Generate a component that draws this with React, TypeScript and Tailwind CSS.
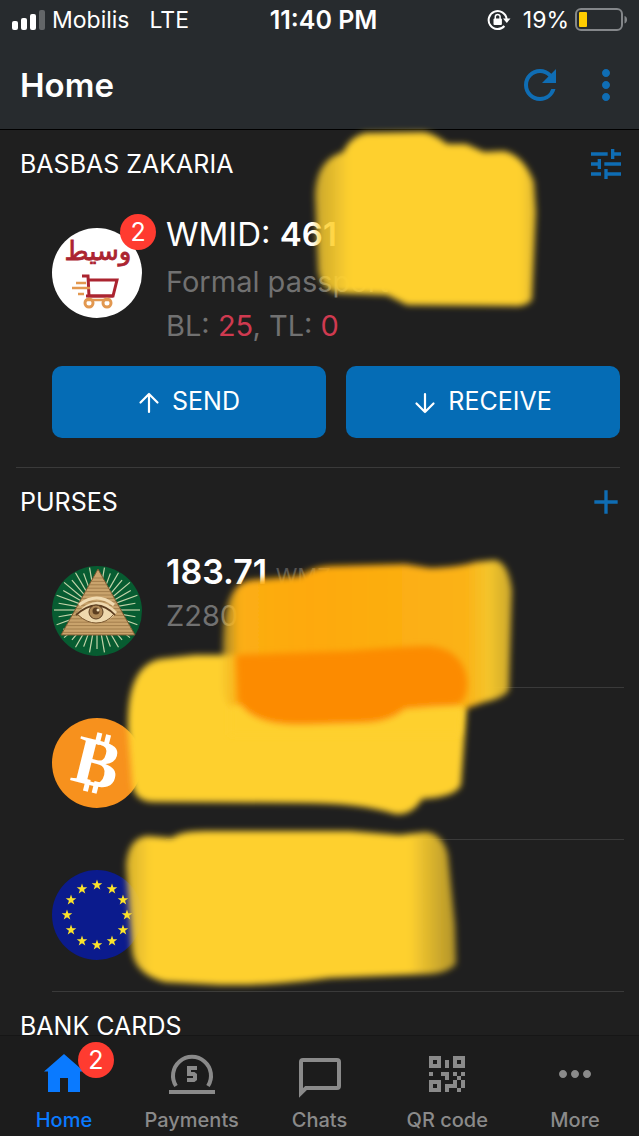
import * as React from 'react';
import { MdAdd, MdMoreHoriz, MdMoreVert, MdRefresh, MdTune } from 'react-icons/md';

function SignalIcon() {
  return (
    <svg width="34" height="20" viewBox="0 0 34 20" fill="#fff">
      <rect x="0" y="11" width="6" height="9" rx="2" />
      <rect x="9" y="8" width="6" height="12" rx="2" />
      <rect x="18" y="4" width="6" height="16" rx="2" />
      <rect x="27" y="0" width="6" height="20" rx="2" opacity="0.28" />
    </svg>
  );
}

function RotationLockIcon() {
  return (
    <svg width="24" height="22" viewBox="0 0 24 22" fill="none">
      <path d="M19.6 10A9 9 0 1 0 17.4 17" stroke="#fff" strokeWidth="2" />
      <path d="M16 9.5h7.5l-3.7 4.6z" fill="#fff" />
      <rect x="6.5" y="9.5" width="8.4" height="6.5" rx="1" fill="#fff" />
      <path d="M8.3 10V7.8a2.4 2.4 0 0 1 4.8 0V10" stroke="#fff" strokeWidth="1.5" />
    </svg>
  );
}

function BatteryIcon() {
  return (
    <svg width="54" height="24" viewBox="0 0 54 24" fill="none">
      <rect x="1" y="1" width="46" height="21" rx="5" stroke="#84878a" strokeWidth="2" />
      <rect x="4" y="4" width="8" height="15" rx="1" fill="#ffcc00" />
      <path d="M49.5 8c3.4.8 3.4 6.500 0 7.500z" fill="#84878a" />
    </svg>
  );
}

function ArrowIcon({ down }: { down?: boolean }) {
  return (
    <svg width="22" height="24" viewBox="0 0 22 24" fill="none" stroke="#fff" strokeWidth="2.2" strokeLinecap="round" strokeLinejoin="round">
      {down ? <path d="M11 4v18M2.500 13.500L11 22l8.500-8.500" /> : <path d="M11 22V4M2.500 12.500L11 4l8.500 8.500" />}
    </svg>
  );
}

function ShopAvatar() {
  return (
    <svg width="90" height="90" viewBox="0 0 90 90">
      <circle cx="45" cy="45" r="45" fill="#fff" />
      <text
        x="46"
        y="32"
        textAnchor="middle"
        direction="rtl"
        fontSize="26"
        fontFamily="'DejaVu Sans', sans-serif"
        fill="#ab2430"
        stroke="#ab2430"
        strokeWidth="0.8"
      >
        وسيط
      </text>
      <g fill="none" stroke="#ab2430" strokeWidth="3">
        <path d="M30 48h6l1 20h24l4-16H37" />
        <path d="M34 68h27" />
      </g>
      <g fill="none" stroke="#e29850" strokeWidth="2.500">
        <path d="M24 55h10M20 60h18M26 66h6" />
        <path d="M34 72h25" />
        <circle cx="37" cy="75" r="4" strokeWidth="3" />
        <circle cx="55" cy="75" r="4" strokeWidth="3" />
      </g>
    </svg>
  );
}

const rays = Array.from({ length: 36 }, (_, i) => (i * Math.PI) / 18);
const courses = Array.from({ length: 17 }, (_, i) => 12 + i * 3.4);

function PyramidAvatar() {
  return (
    <svg width="90" height="90" viewBox="0 0 90 90">
      <circle cx="45" cy="45" r="45" fill="#075c31" />
      {rays.map((a, i) => (
        <line
          key={i}
          x1={45 + 18 * Math.cos(a)}
          y1={44 + 18 * Math.sin(a)}
          x2={45 + (i % 2 ? 39 : 43) * Math.cos(a)}
          y2={44 + (i % 2 ? 39 : 43) * Math.sin(a)}
          stroke="#c4d4aa"
          strokeWidth="1.2"
        />
      ))}
      <path d="M46 3L83 69H9z" fill="#c9a36c" stroke="#7b5830" strokeWidth="1" />
      {courses.map((y) => (
        <line key={y} x1={46 - (y - 3) * 0.56} y1={y} x2={46 + (y - 3) * 0.56} y2={y} stroke="#94703f" strokeWidth="0.7" />
      ))}
      <path d="M25 47Q45 25 65 46Q57 57 44 57Q33 57 25 47z" fill="#efd9ae" />
      <path d="M27 39Q45 25 62 39" fill="none" stroke="#f0dab0" strokeWidth="3" />
      <path d="M24 49Q45 30 63 49" fill="none" stroke="#5b3d20" strokeWidth="1.800" />
      <path d="M26 49Q35 57 44 57Q55 57 62 48" fill="none" stroke="#7b5830" strokeWidth="1" />
      <circle cx="44" cy="46" r="7" fill="#b08a58" stroke="#5b3d20" strokeWidth="1" />
      <circle cx="44" cy="45" r="3.500" fill="#5b3d20" />
      <circle cx="46" cy="44" r="1.500" fill="#f4e3bd" />
    </svg>
  );
}

function BitcoinAvatar() {
  return (
    <svg width="90" height="90" viewBox="0 0 90 90">
      <circle cx="45" cy="45" r="45" fill="#f7911d" />
      <g transform="rotate(14 45 45)" fill="#fff">
        <rect x="38" y="15" width="5" height="12" />
        <rect x="47" y="15" width="5" height="12" />
        <rect x="38" y="63" width="5" height="12" />
        <rect x="47" y="63" width="5" height="12" />
        <text x="45" y="68" textAnchor="middle" fontSize="69" fontWeight="700" fontFamily="'Liberation Serif', serif">
          B
        </text>
      </g>
    </svg>
  );
}

const stars = Array.from({ length: 12 }, (_, i) => (i * Math.PI) / 6);

function EuroAvatar() {
  return (
    <svg width="90" height="90" viewBox="0 0 90 90">
      <circle cx="45" cy="45" r="45" fill="#0b1b8d" />
      {stars.map((a, i) => (
        <path
          key={i}
          transform={`translate(${45 + 30 * Math.sin(a)} ${45 - 30 * Math.cos(a)})`}
          d="M0-5.500L1.300-1.700H5.300L2.100.700 3.300 4.500 0 2.200-3.300 4.500-2.100.700-5.300-1.700H-1.300z"
          fill="#fbe32b"
        />
      ))}
    </svg>
  );
}

function HomeIcon() {
  return (
    <svg width="48" height="48" viewBox="0 0 48 48" fill="currentColor">
      <path d="M24 4l20 17.500h-4V42H28V28h-8v14H8V21.500H4z" />
    </svg>
  );
}

function PaymentsIcon() {
  return (
    <svg width="48" height="48" viewBox="0 0 48 48" fill="currentColor">
      <path d="M8 36A19 19 0 1 1 40 36" fill="none" stroke="currentColor" strokeWidth="4" />
      <rect x="1" y="40" width="46" height="4" />
      <path d="M19 16h10v4h-6v2h3.500l2.500 2v6l-2.500 2H19v-4h6v-2h-6z" />
    </svg>
  );
}

function ChatsIcon() {
  return (
    <svg width="48" height="48" viewBox="0 0 48 48" fill="none" stroke="currentColor" strokeWidth="4">
      <path d="M6 43V12q0-2 2-2h34q2 0 2 2v24q0 2-2 2H11z" />
    </svg>
  );
}

function QrIcon() {
  return (
    <svg width="48" height="48" viewBox="0 0 24 24" fill="currentColor">
      <path d="M3 11h2v2H3v-2m8-6h2v4h-2V5m-2 6h4v4h-2v-2H9v-2m6 0h2v2h2v-2h2v2h-2v2h2v4h-2v2h-2v-2h-4v2h-2v-4h4v-2h2v-2h-2v-2m4 8v-4h-2v4h2M15 3h6v6h-6V3m2 2v2h2V5h-2M3 3h6v6H3V3m2 2v2h2V5H5M3 15h6v6H3v-6m2 2v2h2v-2H5z" />
    </svg>
  );
}

// Marker strokes that hide the account details
function MarkerStrokes() {
  return (
    <svg className="pointer-events-none absolute left-0 top-0" width="639" height="1136" viewBox="0 0 639 1136" aria-hidden="true">
      <defs>
        <filter id="soft" x="-10%" y="-10%" width="120%" height="120%">
          <feGaussianBlur stdDeviation="3" />
        </filter>
        <linearGradient id="fadeTop" gradientUnits="userSpaceOnUse" x1="314" y1="0" x2="536" y2="0">
          <stop offset="0" stopColor="#fed02f" stopOpacity="0.75" />
          <stop offset="0.16" stopColor="#fed02f" />
          <stop offset="0.93" stopColor="#fed02f" />
          <stop offset="1" stopColor="#fed02f" stopOpacity="0.85" />
        </linearGradient>
        <linearGradient id="fadeBottom" gradientUnits="userSpaceOnUse" x1="124" y1="0" x2="456" y2="0">
          <stop offset="0" stopColor="#fed02f" stopOpacity="0.8" />
          <stop offset="0.08" stopColor="#fed02f" />
          <stop offset="0.86" stopColor="#fed02f" />
          <stop offset="1" stopColor="#fed02f" stopOpacity="0.65" />
        </linearGradient>
        <linearGradient id="fadeOrange" gradientUnits="userSpaceOnUse" x1="222" y1="0" x2="512" y2="0">
          <stop offset="0" stopColor="#f3c32e" stopOpacity="0.6" />
          <stop offset="0.06" stopColor="#fcae14" />
          <stop offset="0.3" stopColor="#fea90b" />
          <stop offset="0.84" stopColor="#fbb216" />
          <stop offset="0.92" stopColor="#f4c52d" />
          <stop offset="1" stopColor="#e8be2d" stopOpacity="0.85" />
        </linearGradient>
      </defs>
      <g filter="url(#soft)">
        <path
          fill="url(#fadeTop)"
          d="M343 152Q350 137 365 133L424 132Q435 134 447 144L466 144 484 152 504 151Q524 156 534 182L536 212 532 300Q526 307 513 306L407 305 387 295 337 293Q320 288 318 270L315 195Q316 160 343 152z"
        />
        <path
          fill="#fed02f"
          d="M128 730Q126 666 160 659L195 655 460 655 467 705 461 785Q456 797 422 799 412 816 395 814 360 803 300 803L155 802Q132 802 132 780z"
        />
        <path
          fill="url(#fadeOrange)"
          d="M223 640Q224 585 250 580L300 576Q315 566 330 566L405 564 430 568Q460 567 475 562L495 560Q508 562 512 590L509 690Q504 698 485 702L465 709 235 709Q222 705 222 680z"
        />
        <path
          fill="url(#fadeBottom)"
          d="M126 865Q128 838 147 836L172 838Q180 831 205 831L350 831 400 835 425 832Q443 833 448 855L455 925 456 964Q448 973 430 974L330 978Q270 986 220 985L165 982Q134 974 132 950z"
        />
      </g>
      <g filter="url(#soft)">
        <path fill="#fed02f" d="M230 706L462 707 460 735 230 735z" />
        <path
          fill="#fc8b00"
          d="M236 655L350 651Q410 646 430 646 463 650 467 680 468 702 455 705L405 709Q390 722 365 723L300 725Q250 725 238 700z"
        />
      </g>
    </svg>
  );
}

function Badge({ className }: { className: string }) {
  return (
    <span className={`absolute flex h-9 w-9 items-center justify-center rounded-full bg-[#ff3b30] text-[25px] leading-none text-white ${className}`}>
      2
    </span>
  );
}

function SectionHeader({ title, children }: { title: string; children?: React.ReactNode }) {
  return (
    <div className="flex h-17 items-center justify-between pl-5 pr-[13px]">
      <h2 className="text-[25px] leading-8">{title}</h2>
      {children}
    </div>
  );
}

function PurseRow({ icon, last, children }: { icon: React.ReactNode; last?: boolean; children?: React.ReactNode }) {
  return (
    <li className={`ml-13 mr-[15px] flex h-38 gap-6 border-[#3a3a3a] ${last ? 'border-b' : ''}`}>
      <div className="shrink-0 pt-[30px]">{icon}</div>
      <div className={`flex-1 border-[#3a3a3a] pt-3.5 ${last ? '' : 'border-b'}`}>{children}</div>
    </li>
  );
}

const tabs = [
  { label: 'Home', icon: <HomeIcon />, active: true },
  { label: 'Payments', icon: <PaymentsIcon /> },
  { label: 'Chats', icon: <ChatsIcon /> },
  { label: 'QR code', icon: <QrIcon /> },
  { label: 'More', icon: <MdMoreHoriz size={48} /> },
];

export default function App() {
  return (
    <div className="relative flex h-screen flex-col overflow-hidden bg-[#1f1f1f] font-['Inter',sans-serif] text-white">
      <header className="shrink-0 border-b border-black bg-[#272b2e]">
        <div className="flex h-10 items-center justify-between pl-3 pr-2.5 text-[23px] leading-10">
          <div className="flex flex-1 items-center">
            <SignalIcon />
            <span className="ml-1.5">Mobilis</span>
            <span className="ml-5">LTE</span>
          </div>
          <span className="pl-1.5 text-[25px] font-semibold">11:40 PM</span>
          <div className="flex flex-1 items-center justify-end">
            <RotationLockIcon />
            <span className="ml-3 mr-1.5">19%</span>
            <BatteryIcon />
          </div>
        </div>
        <div className="flex h-[89px] items-center pl-5 pr-[9px]">
          <h1 className="flex-1 text-[33px] font-semibold leading-10">Home</h1>
          <button className="text-[#0f6db4]" aria-label="Refresh">
            <MdRefresh size={48} />
          </button>
          <button className="ml-[18px] text-[#0f6db4]" aria-label="Menu">
            <MdMoreVert size={48} />
          </button>
        </div>
      </header>

      <main className="min-h-0 flex-1 overflow-y-auto pb-25 [scrollbar-width:none]">
        <section>
          <SectionHeader title="BASBAS ZAKARIA">
            <button className="text-[#0f6db4]" aria-label="Settings">
              <MdTune size={40} />
            </button>
          </SectionHeader>
          <div className="flex gap-6 pl-13 pt-3">
            <div className="relative mt-[18px] h-[90px] w-[90px] shrink-0">
              <ShopAvatar />
              <Badge className="-right-3.5 -top-3.5" />
            </div>
            <div className="text-[29px] leading-11 text-[#717171]">
              <p className="mb-0.5 text-[33px] leading-12 text-white">
                WMID: <b className="font-semibold">461</b>
              </p>
              <p>Formal passport</p>
              <p>
                BL: <span className="text-[#cf3a50]">25</span>, TL: <span className="text-[#cf3a50]">0</span>
              </p>
            </div>
          </div>
          <div className="flex gap-5 pb-[29px] pl-13 pr-[19px] pt-[18px] text-[25px]">
            <button className="flex h-18 flex-1 items-center justify-center gap-3 rounded-[10px] bg-[#056cb5]">
              <ArrowIcon />
              SEND
            </button>
            <button className="flex h-18 flex-1 items-center justify-center gap-3 rounded-[10px] bg-[#056cb5]">
              <ArrowIcon down />
              RECEIVE
            </button>
          </div>
          <hr className="ml-4 mr-[19px] border-[#3a3a3a]" />
        </section>

        <section>
          <SectionHeader title="PURSES">
            <button className="text-[#0f6db4]" aria-label="Add purse">
              <MdAdd size={40} />
            </button>
          </SectionHeader>
          <ul>
            <PurseRow icon={<PyramidAvatar />}>
              <p className="text-[34px] font-semibold leading-11">
                183.71 <span className="text-[22px] font-normal text-[#555]">WMZ</span>
              </p>
              <p className="text-[29px] leading-9 text-[#717171]">Z280</p>
            </PurseRow>
            <PurseRow icon={<BitcoinAvatar />} />
            <PurseRow icon={<EuroAvatar />} last />
          </ul>
        </section>

        <SectionHeader title="BANK CARDS" />
      </main>

      <nav className="absolute inset-x-0 bottom-0 flex border-t border-[#161616] bg-[#1c1c1c]/95">
        {tabs.map((tab) => (
          <a
            key={tab.label}
            href="#"
            className={`flex h-25 flex-1 flex-col items-center pt-3.5 ${tab.active ? 'text-[#0a7aff]' : 'text-[#8a8a8a]'}`}
          >
            <span className="relative">
              {tab.icon}
              {tab.active && <Badge className="-right-[26px] -top-2" />}
            </span>
            <span className="mt-2.5 text-[20px] font-medium leading-6">{tab.label}</span>
          </a>
        ))}
      </nav>
      <MarkerStrokes />
    </div>
  );
}
